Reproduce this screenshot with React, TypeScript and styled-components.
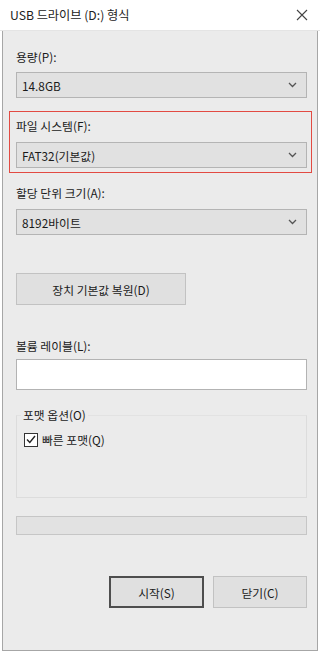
import React from "react";
import styled, { createGlobalStyle } from "styled-components";

const GlobalStyle = createGlobalStyle`
  html, body {
    margin: 0;
    padding: 0;
    background: #ffffff;
  }
  body {
    font-family: "Noto Sans CJK KR", "Noto Sans", sans-serif;
    font-size: 12px;
    color: #1a1a1a;
  }
`;

const Frame = styled.div`
  width: 320px;
  height: 655px;
  box-sizing: border-box;
  padding: 0 2px 4px 2px;
  display: flex;
  flex-direction: column;
  background: #ffffff;
`;

const TitleBar = styled.div`
  height: 31px;
  margin: 0 -2px;
  padding: 0 12px 0 10px;
  display: flex;
  align-items: center;
  justify-content: space-between;
  background: #ffffff;
  border-bottom: 1px solid #e4e4e4;
  box-sizing: border-box;
  font-size: 12.2px;
  color: #222;
`;

const CloseIcon = styled.svg`
  width: 12px;
  height: 12px;
  stroke: #444;
  stroke-width: 1.1;
`;

const Body = styled.div`
  flex: 1;
  display: flex;
  flex-direction: column;
  padding: 18px 10px 0 13px;
  background: #ebebeb;
  border: 1px solid #a6a6a6;
  border-top: none;
`;

const Label = styled.div<{ $mt?: number }>`
  height: 16px;
  line-height: 16px;
  margin-top: ${(p) => p.$mt ?? 0}px;
  font-size: 11.8px;
`;

const Select = styled.div<{ $mt?: number }>`
  height: 26px;
  margin-top: ${(p) => p.$mt ?? 8}px;
  box-sizing: border-box;
  padding: 0 9px 0 5px;
  display: flex;
  align-items: center;
  justify-content: space-between;
  background: #e1e1e1;
  border: 1px solid #b4b4b4;
  font-size: 11.8px;
`;

const Chevron = styled.svg`
  width: 9px;
  height: 6px;
  fill: none;
  stroke: #555;
  stroke-width: 1.3;
`;

const Highlight = styled.div`
  margin: 13px -5px 0 -7px;
  padding: 6px 4px 4px 6px;
  border: 1px solid #e24a42;
`;

const Button = styled.div<{ $mt?: number; $w: number; $primary?: boolean }>`
  width: ${(p) => p.$w}px;
  height: 32px;
  margin-top: ${(p) => p.$mt ?? 0}px;
  box-sizing: border-box;
  display: flex;
  align-items: center;
  justify-content: center;
  background: #e0e0e0;
  border: ${(p) => (p.$primary ? "2px solid #4e4e4e" : "1px solid #c2c2c2")};
  font-size: 11.8px;
`;

const TextInput = styled.div`
  height: 31px;
  margin-top: 5px;
  box-sizing: border-box;
  background: #ffffff;
  border: 1px solid #b3b3b3;
`;

const Group = styled.fieldset`
  margin: 18px 0 0 0;
  padding: 9px 0 0 7px;
  height: 90px;
  box-sizing: border-box;
  border: 1px solid #dcdcdc;
  border-top-color: #e2e2e2;

  legend {
    padding: 0 2px;
    margin-left: -3px;
    font-size: 11.8px;
    line-height: 14px;
  }
`;

const CheckRow = styled.label`
  display: flex;
  align-items: center;
  gap: 4px;
  font-size: 11.8px;
`;

const Box = styled.span`
  width: 14px;
  height: 14px;
  box-sizing: border-box;
  display: flex;
  align-items: center;
  justify-content: center;
  background: #ffffff;
  border: 1px solid #333;
`;

const Progress = styled.div`
  height: 19px;
  margin-top: 18px;
  box-sizing: border-box;
  background: #e2e2e2;
  border: 1px solid #c6c6c6;
`;

const Actions = styled.div`
  margin-top: 41px;
  display: flex;
  justify-content: flex-end;
  gap: 9px;
`;

const Dropdown: React.FC<{ value: string; mt?: number }> = ({ value, mt }) => (
  <Select $mt={mt}>
    <span>{value}</span>
    <Chevron viewBox="0 0 9 6">
      <path d="M1 1l3.5 3.5L8 1" />
    </Chevron>
  </Select>
);

const App: React.FC = () => (
  <>
    <GlobalStyle />
    <Frame>
      <TitleBar>
        <span>USB 드라이브 (D:) 형식</span>
        <CloseIcon viewBox="0 0 12 12">
          <path d="M1 1l10 10M11 1L1 11" />
        </CloseIcon>
      </TitleBar>
      <Body>
        <Label>용량(P):</Label>
        <Dropdown value="14.8GB" mt={7} />

        <Highlight>
          <Label>파일 시스템(F):</Label>
          <Dropdown value="FAT32(기본값)" />
        </Highlight>

        <Label $mt={12}>할당 단위 크기(A):</Label>
        <Dropdown value="8192바이트" />

        <Button $w={170} $mt={38}>
          장치 기본값 복원(D)
        </Button>

        <Label $mt={33}>볼륨 레이블(L):</Label>
        <TextInput />

        <Group>
          <legend>포맷 옵션(O)</legend>
          <CheckRow>
            <Box>
              <svg width="10" height="9" viewBox="0 0 10 9">
                <path d="M1 4.5l2.8 3L9 1" fill="none" stroke="#222" strokeWidth="1.4" />
              </svg>
            </Box>
            빠른 포맷(Q)
          </CheckRow>
        </Group>

        <Progress />

        <Actions>
          <Button $w={95} $primary>
            시작(S)
          </Button>
          <Button $w={94}>닫기(C)</Button>
        </Actions>
      </Body>
    </Frame>
  </>
);

export default App;
